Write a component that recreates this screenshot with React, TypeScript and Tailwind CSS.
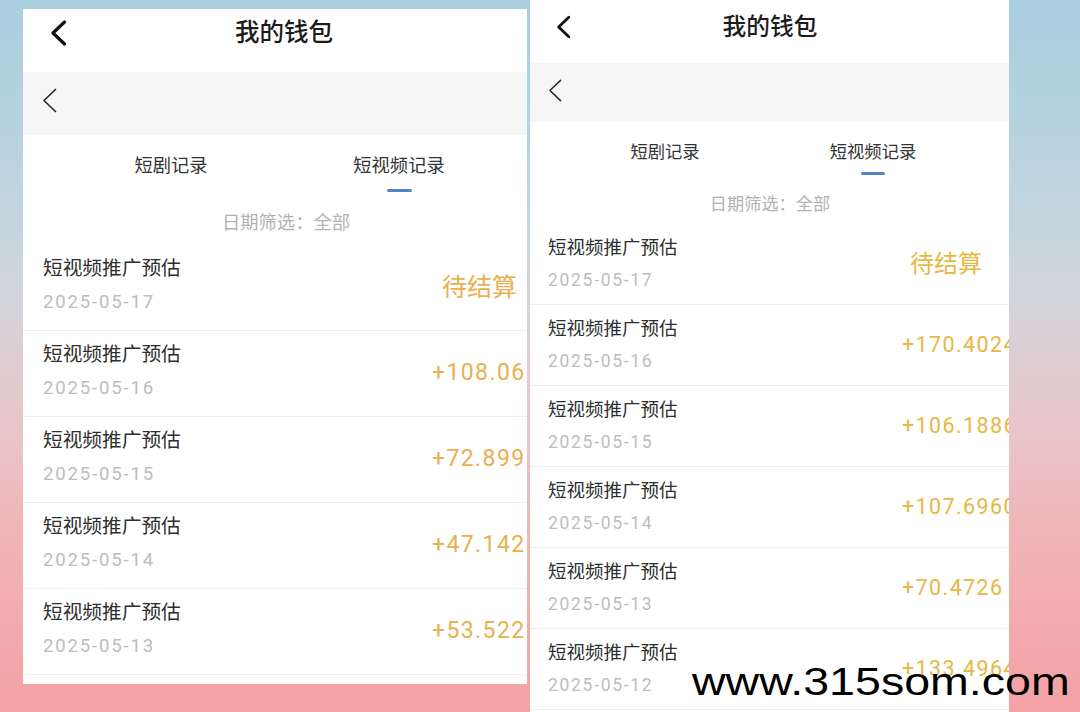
import React from "react";

type V = {
  panel: string;
  header: string;
  chev: string;
  titleBox: string;
  title: string;
  bar: string;
  barChev: string;
  tabs: string;
  tab: string;
  tabText: string;
  underline: string;
  filter: string;
  row: string;
  left: string;
  rowTitle: string;
  rowDate: string;
  amount: string;
  pending: string;
};

const LV: V = {
  panel: "mt-[9px] ml-[23px] h-[675px] w-[504px]",
  header: "h-[63px] pl-[27px] pb-[15px]",
  chev: "h-[26px] w-[17px]",
  titleBox: "pr-[26px]",
  title: "text-[24.5px] leading-[32px]",
  bar: "h-[63px] pl-[19px] pb-[7px]",
  barChev: "h-[25px] w-[15px]",
  tabs: "pl-[34px] pt-[18px]",
  tab: "w-[228px]",
  tabText: "text-[18.3px] leading-[26px]",
  underline: "mt-[10px] h-[3px] w-[25px]",
  filter: "mt-[18px] mb-[9px] text-[18.3px] leading-[26px] pl-[22px]",
  row: "h-[86px] pl-[20px]",
  left: "w-[389px] pt-[11px]",
  rowTitle: "text-[19.7px] leading-[26px]",
  rowDate: "mt-[7px] text-[18.6px] leading-[26px] tracking-[1.8px]",
  amount: "text-[23px] tracking-[1.4px] text-[#e8b04e]",
  pending: "ml-[10px] text-[25px] tracking-normal",
};

const RV: V = {
  panel: "ml-[3px] h-[712px] w-[479px]",
  header: "h-[63px] pl-[26px] pb-[9px]",
  chev: "h-[24px] w-[15px]",
  titleBox: "pr-[40px]",
  title: "text-[23.7px] leading-[30px]",
  bar: "h-[59px] pl-[18px] pb-[5px]",
  barChev: "h-[23px] w-[14px]",
  tabs: "pl-[31px] pt-[18px]",
  tab: "w-[208px]",
  tabText: "text-[17.3px] leading-[24px]",
  underline: "mt-[8px] h-[3px] w-[24px]",
  filter: "mt-[17px] mb-[8px] text-[17.2px] leading-[24px] pl-[1px]",
  row: "h-[81px] pl-[18px]",
  left: "w-[354px] pt-[12px]",
  rowTitle: "text-[18.5px] leading-[24px]",
  rowDate: "mt-[8px] text-[17.5px] leading-[24px] tracking-[1.7px]",
  amount: "text-[21.5px] tracking-[1.4px] text-[#e6b844]",
  pending: "ml-[8px] text-[24px] tracking-normal",
};

type Row = { date: string; amount: string };

const leftRows: Row[] = [
  { date: "2025-05-17", amount: "待结算" },
  { date: "2025-05-16", amount: "+108.06" },
  { date: "2025-05-15", amount: "+72.899" },
  { date: "2025-05-14", amount: "+47.142" },
  { date: "2025-05-13", amount: "+53.522" },
];

const rightRows: Row[] = [
  { date: "2025-05-17", amount: "待结算" },
  { date: "2025-05-16", amount: "+170.4024" },
  { date: "2025-05-15", amount: "+106.1886" },
  { date: "2025-05-14", amount: "+107.6960" },
  { date: "2025-05-13", amount: "+70.4726" },
  { date: "2025-05-12", amount: "+133.4964" },
  { date: "2025-05-11", amount: "+98.2210" },
];

function BoldChevron({ cls }: { cls: string }) {
  return (
    <svg className={cls} viewBox="0 0 17 26" fill="none">
      <polyline
        points="14.5,2 3,13 14.5,24"
        stroke="#111"
        strokeWidth="3.2"
        strokeLinecap="round"
        strokeLinejoin="round"
      />
    </svg>
  );
}

function ThinChevron({ cls }: { cls: string }) {
  return (
    <svg className={cls} viewBox="0 0 15 25" fill="none">
      <polyline
        points="13.5,1.5 2,12.5 13.5,23.5"
        stroke="#2a2a2a"
        strokeWidth="1.7"
        strokeLinecap="round"
        strokeLinejoin="round"
      />
    </svg>
  );
}

function Panel({ v, rows }: { v: V; rows: Row[] }) {
  return (
    <div className={`${v.panel} shrink-0 overflow-hidden bg-white flex flex-col`}>
      <div className={`${v.header} flex items-center bg-white shrink-0`}>
        <BoldChevron cls={v.chev} />
        <div className={`${v.titleBox} flex-1 text-center`}>
          <span className={`${v.title} font-medium text-[#1c1c1c]`}>我的钱包</span>
        </div>
      </div>
      <div className={`${v.bar} flex items-center bg-[#f6f6f6] shrink-0`}>
        <ThinChevron cls={v.barChev} />
      </div>
      <div className="flex flex-col shrink-0">
        <div className={`${v.tabs} flex`}>
          <div className={`${v.tab} flex flex-col items-center`}>
            <span className={`${v.tabText} text-[#333]`}>短剧记录</span>
          </div>
          <div className={`${v.tab} flex flex-col items-center`}>
            <span className={`${v.tabText} text-[#333]`}>短视频记录</span>
            <div className={`${v.underline} rounded-full bg-[#5783c6]`} />
          </div>
        </div>
        <div className={`${v.filter} text-center text-[#b2b2b2]`}>日期筛选：全部</div>
      </div>
      {rows.map((r, i) => (
        <div key={i} className={`${v.row} flex shrink-0 border-b border-[#eeeeee]`}>
          <div className={`${v.left} shrink-0 flex flex-col`}>
            <span className={`${v.rowTitle} text-[#2e2e2e]`}>短视频推广预估</span>
            <span className={`${v.rowDate} text-[#bdbdbd]`}>{r.date}</span>
          </div>
          <div className={`${v.amount} flex items-center whitespace-nowrap`}>
            {r.amount === "待结算" ? (
              <span className={v.pending}>待结算</span>
            ) : (
              <span>{r.amount}</span>
            )}
          </div>
        </div>
      ))}
    </div>
  );
}

export default function App() {
  return (
    <div className="relative h-[712px] w-[1080px] overflow-hidden bg-[linear-gradient(180deg,#a8cee0_0%,#bcd4df_25%,#cfd6dc_40%,#e8c7cb_58%,#f1b2b5_78%,#f4a1a4_100%)] font-['Roboto','Noto_Sans_CJK_SC',sans-serif]">
      <div className="flex items-start">
        <Panel v={LV} rows={leftRows} />
        <Panel v={RV} rows={rightRows} />
      </div>
      <div className="absolute left-[692px] top-[663px] origin-left scale-x-[1.225] whitespace-nowrap font-['Liberation_Sans',Arial,sans-serif] text-[38px] leading-[38px] text-black">
        www.315som.com
      </div>
    </div>
  );
}
